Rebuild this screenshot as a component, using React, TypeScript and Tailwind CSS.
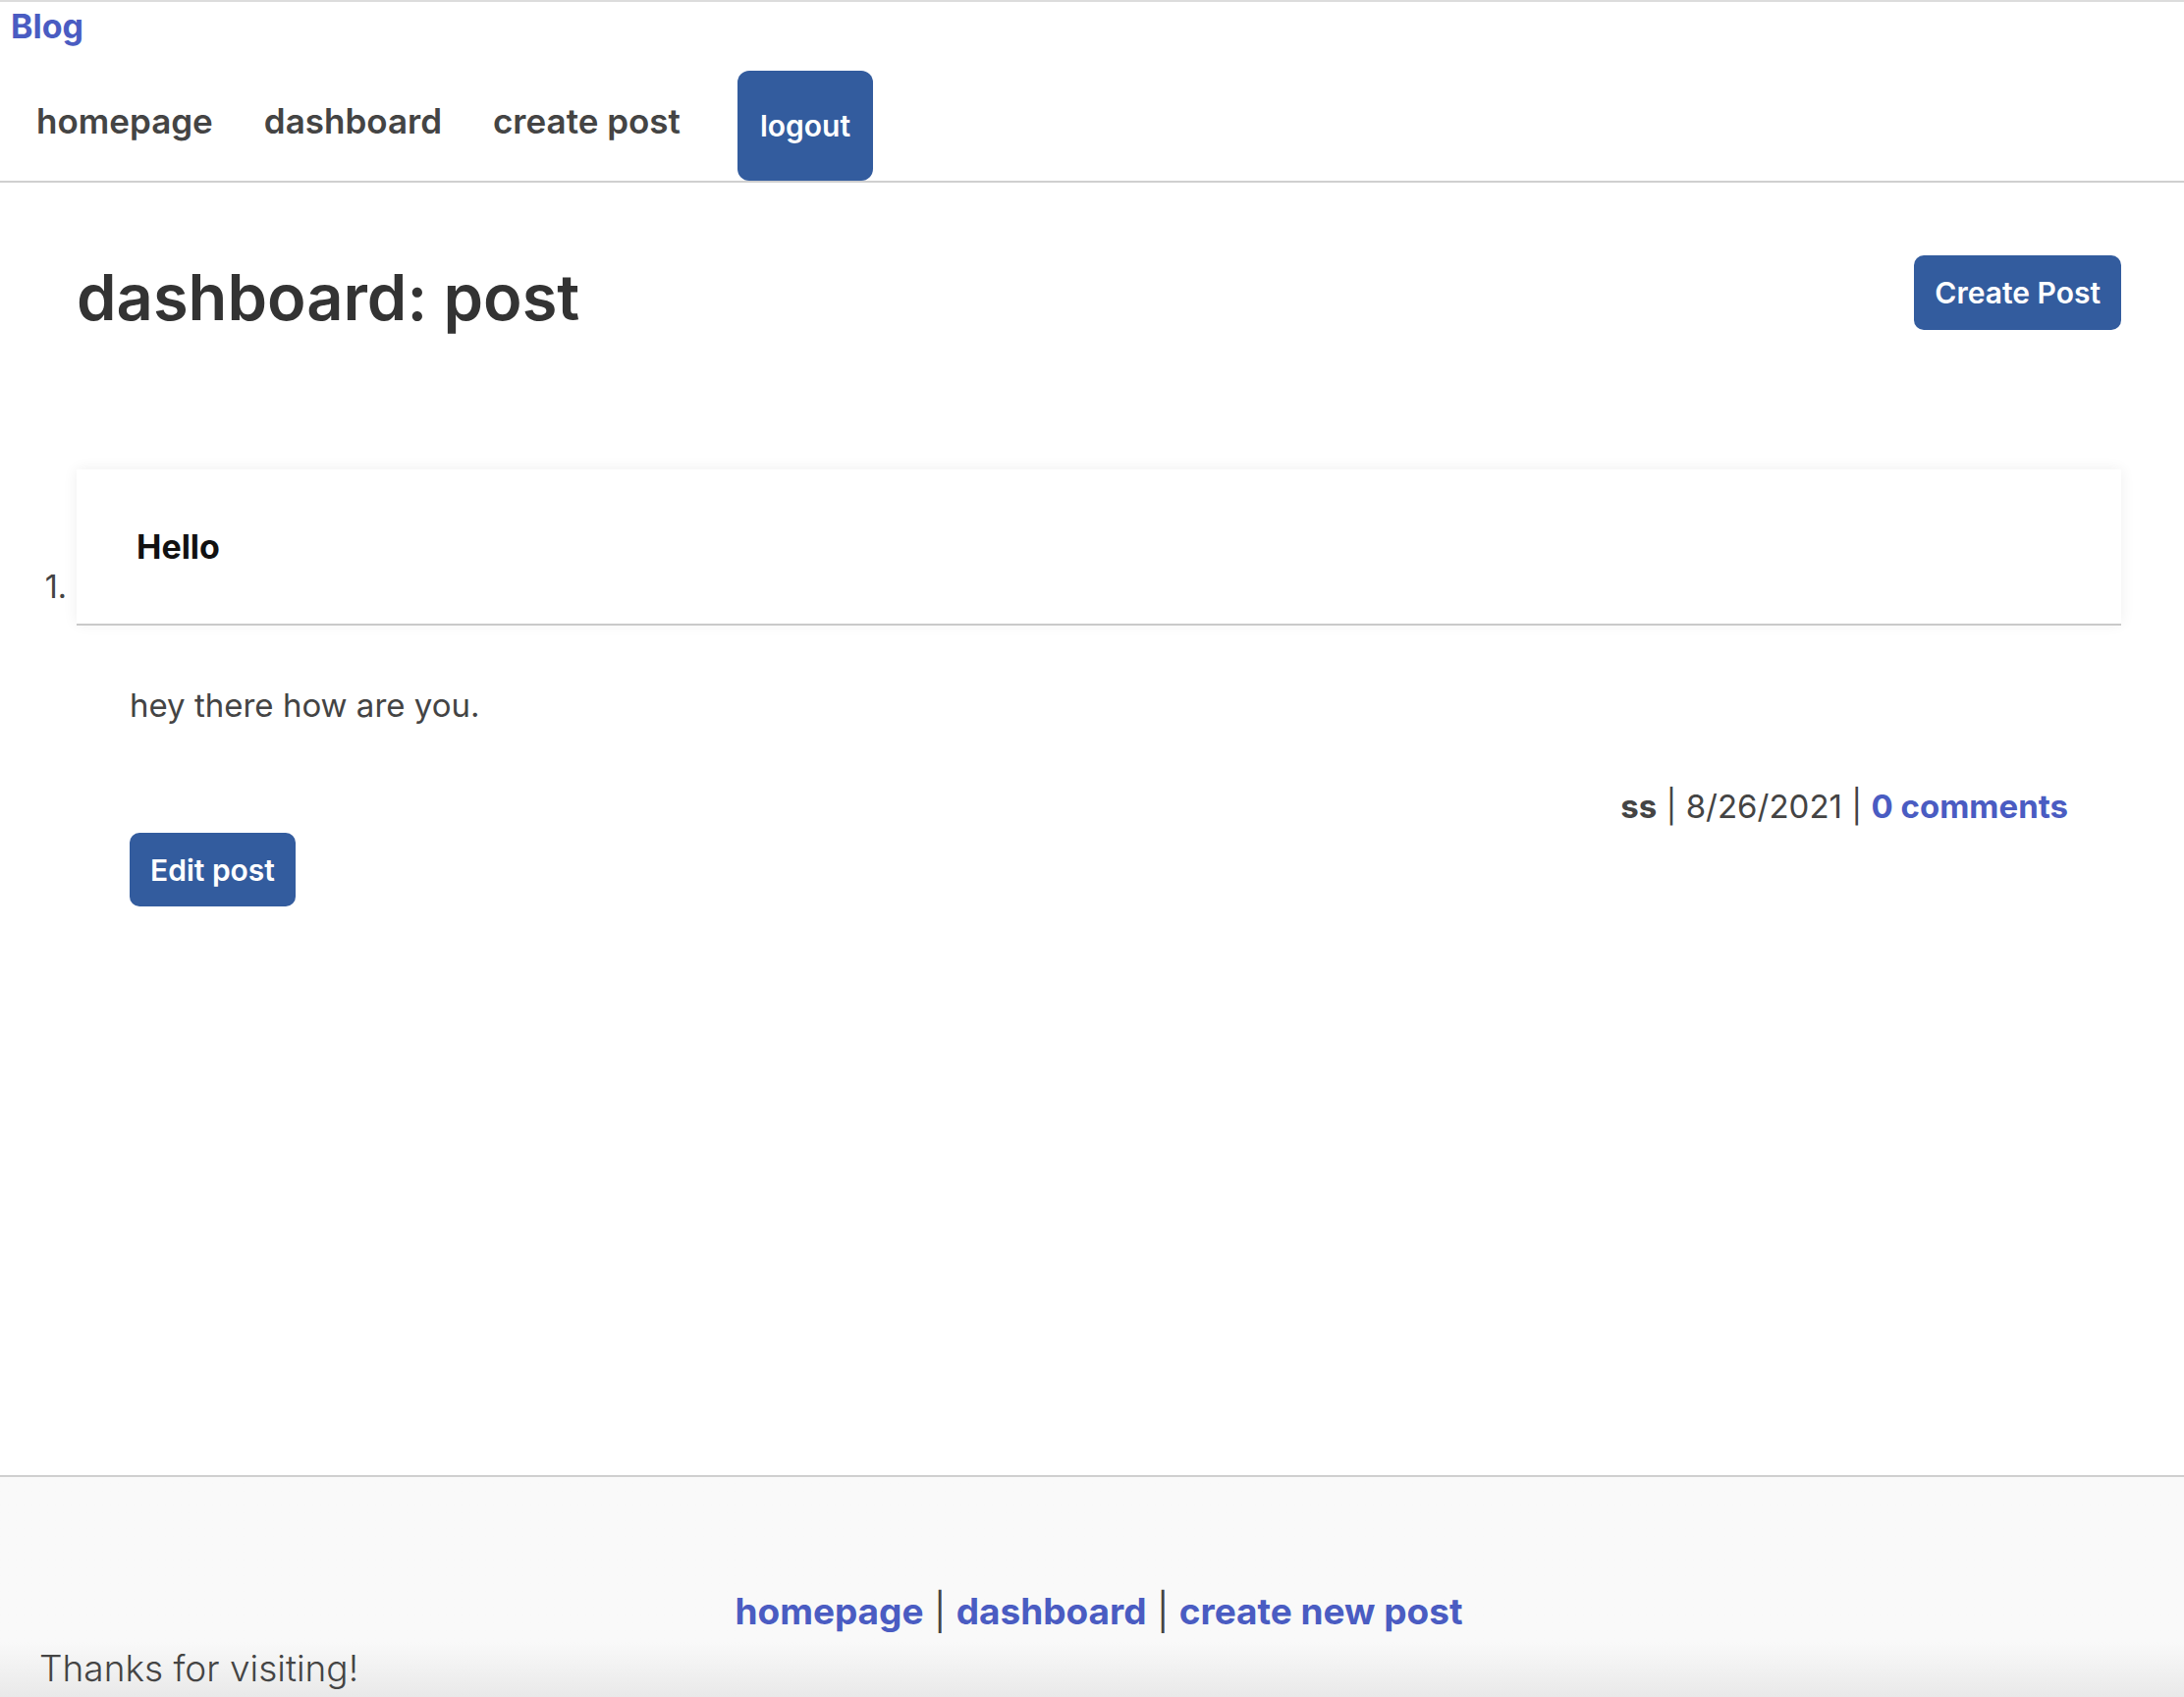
const link = 'text-[#4a5cc2] font-bold'
const btn = 'bg-[#335c9e] text-white font-semibold text-[30px] leading-[30px] rounded-[10px]'

const Header = () => (
  <header className="border-t-2 border-[#dcdcdc] border-b-2 border-b-[#cfcfcf]">
    <div className={`pl-[11px] pt-[9px] text-[34px] leading-[32px] ${link}`}>Blog</div>
    <nav className="mt-[29px] flex items-center pl-[37px] h-[112px]">
      <div className="flex gap-[52px] pb-[10px] text-[35px] leading-[34px] font-semibold text-[#444]">
        <span>homepage</span>
        <span>dashboard</span>
        <span>create post</span>
      </div>
      <button className={`${btn} ml-[58px] h-[112px] px-[23px] rounded-[12px]`}>logout</button>
    </nav>
  </header>
)

const PostItem = () => (
  <li className="flex">
    <div className="w-[78px] h-[159px] shrink-0 flex items-end justify-end pr-[10px] pb-[23px] text-[32px] leading-[32px] text-[#444]">
      1.
    </div>
    <div className="flex-1">
      <div className="h-[157px] bg-white flex items-center pl-[61px] shadow-[0_2px_0_#c9c9c9,0_0_14px_rgba(0,0,0,0.07)]">
        <h2 className="text-[34px] leading-[34px] font-bold text-[#111]">Hello</h2>
      </div>
      <div className="px-[54px] pt-[67px]">
        <p className="text-[33px] leading-[32px] text-[#444]">hey there how are you.</p>
        <p className="mt-[71px] text-right text-[33px] leading-[32px] text-[#444]">
          <span className="font-bold">ss</span> | 8/26/2021 | <span className={link}>0 comments</span>
        </p>
        <button className={`${btn} mt-[11px] h-[75px] px-[21px]`}>Edit post</button>
      </div>
    </div>
  </li>
)

const Footer = () => (
  <footer className="border-t-2 border-[#cfcfcf] bg-linear-to-b from-[#f9f9f9] from-75% to-[#e9e9e9] pt-[119px] pb-[11px]">
    <div className="pl-[14px] text-center text-[37px] leading-[36px] text-[#444]">
      <span className={link}>homepage</span> | <span className={link}>dashboard</span> |{' '}
      <span className={link}>create new post</span>
    </div>
    <p className="mt-[22px] pl-[40px] text-[37px] leading-[36px] font-light text-[#444]">Thanks for visiting!</p>
  </footer>
)

export default function App() {
  return (
    <div className="min-h-screen flex flex-col bg-white font-['Inter',sans-serif]">
      <Header />
      <main className="flex-1 pr-[64px]">
        <div className="flex justify-between items-start pl-[78px] pt-[74px]">
          <h1 className="mt-[11px] text-[65px] leading-[64px] font-semibold text-[#333]">dashboard: post</h1>
          <button className={`${btn} h-[76px] px-[21px]`}>Create Post</button>
        </div>
        <ol className="mt-[142px]">
          <PostItem />
        </ol>
      </main>
      <Footer />
    </div>
  )
}
